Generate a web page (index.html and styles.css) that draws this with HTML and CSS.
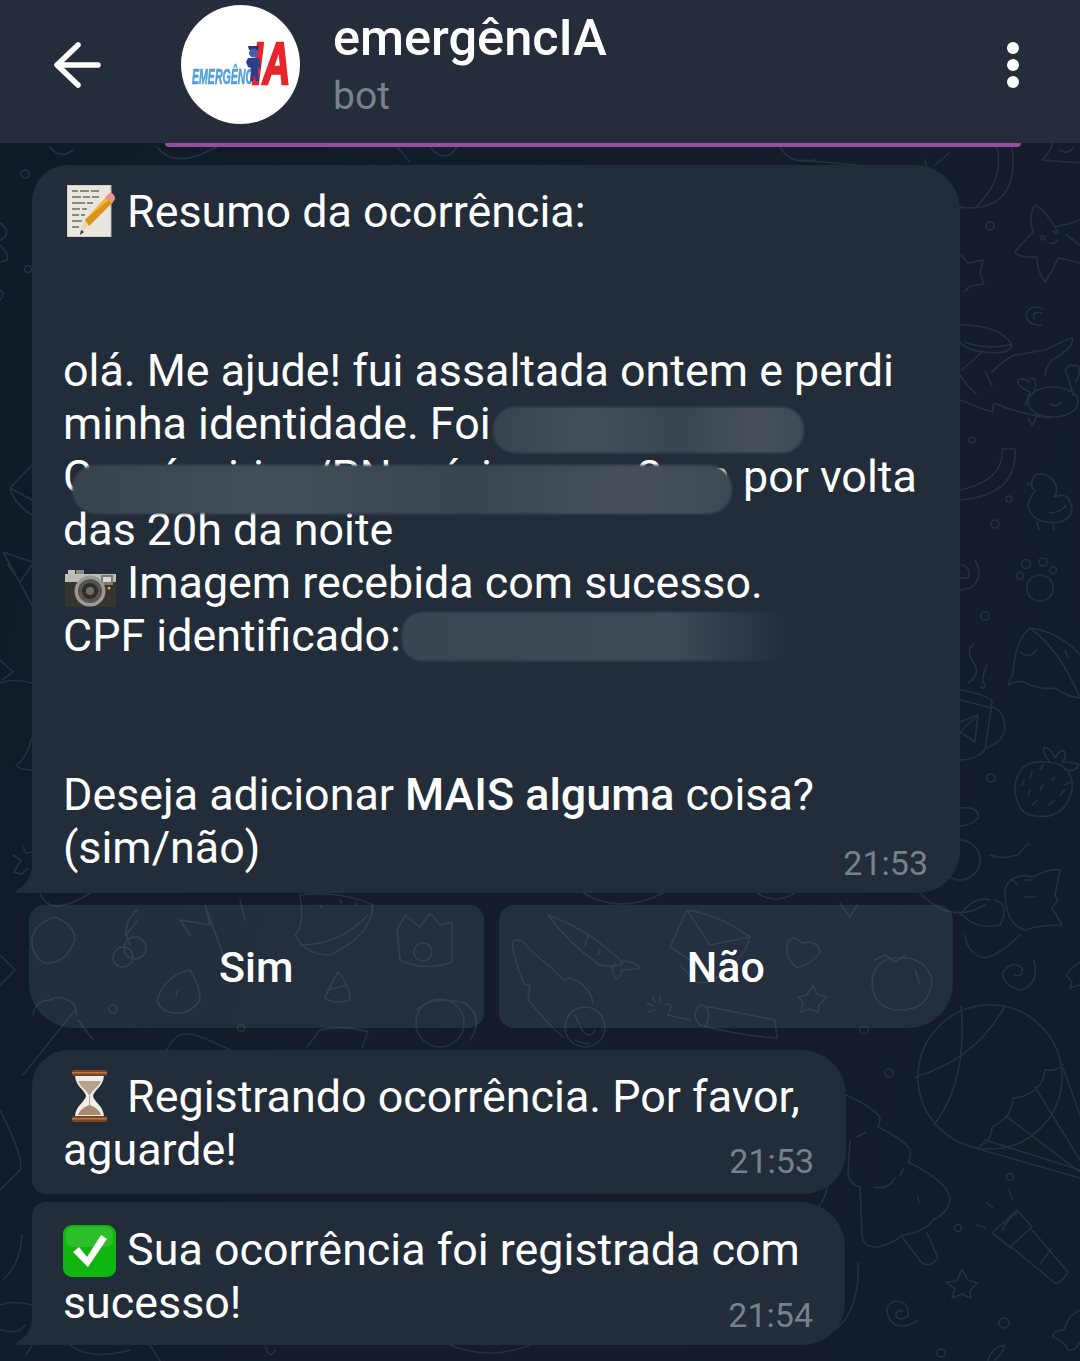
FILE: index.html
```html
<!DOCTYPE html>
<html lang="pt">
<head>
<meta charset="utf-8">
<title>emergêncIA</title>
<link rel="stylesheet" href="styles.css">
</head>
<body>
<div class="phone">
  <svg class="wallpaper" viewBox="0 0 1080 1361" aria-hidden="true">
    <g fill="none" stroke="#263040" stroke-width="1.6" stroke-linecap="round" stroke-linejoin="round">
      <!-- balloon -->
      <circle cx="990" cy="1077" r="72"/>
      <path d="M961 1006Q968 1080 934 1125M1005 1006Q975 1060 915 1077"/>
      <path d="M1063 1064Q1058 1072 1045 1070Q1042 1095 1013 1098Q1012 1118 992 1127Q992 1140 980 1146"/>
      <path d="M985 1140L1080 1170M975 1148L1080 1178M1007 1117L1080 1172M1035 1087L1080 1160M1063 1068L1080 1115"/>
      <!-- tree -->
      <path d="M846 1095Q870 1105 880 1117Q880 1122 878 1127Q905 1140 910 1150Q911 1158 908 1162Q945 1180 950 1197Q950 1212 933 1220Q925 1232 903 1235Q890 1245 877 1247Q862 1248 862 1233L860 1187"/>
      <path d="M850 1140L848 1175Q850 1185 860 1187M903 1238L922 1263Q930 1268 938 1258L927 1233"/>
      <path d="M857 1137L866 1132M875 1187Q888 1190 895 1178M900 1175L904 1168M918 1197L919 1203"/>
      <!-- flashlight -->
      <path d="M992 1233L1017 1210L1032 1227L1010 1247ZM1002 1231Q1008 1218 1017 1212M1010 1246L1055 1283Q1060 1285 1068 1272L1032 1230M1040 1264L1052 1248"/>
      <path d="M1009 1189L1012 1199M987 1203L993 1208M977 1225L985 1228"/>
      <circle cx="1010" cy="1177" r="3.500"/><circle cx="958" cy="1228" r="3.500"/><circle cx="889" cy="1073" r="4"/><circle cx="1004" cy="1323" r="5"/><circle cx="941" cy="1353" r="4"/>
      <path d="M962 1269L968 1280L977 1283L970 1291L971 1298L962 1294L952 1298L955 1289L946 1282L957 1281Z"/>
      <path d="M917 1321Q900 1332 890 1320Q882 1305 896 1301Q910 1302 908 1316Q900 1322 896 1316Q896 1309 903 1311"/>
      <path d="M1080 1310Q1068 1315 1064 1330Q1053 1330 1053 1337Q1065 1342 1068 1350Q1075 1352 1080 1342M988 1360Q993 1346 1005 1345Q1002 1355 995 1360"/>
      <path d="M858 1263Q860 1310 835 1330M827 1187Q825 1200 818 1207"/>
      <!-- top right -->
      <path d="M1012 147Q1020 208 968 208Q935 208 925 160M997 147Q1005 180 975 208M935 165L950 152"/>
      <circle cx="990" cy="226" r="4"/>
      <path d="M1035 205Q1045 210 1055 227Q1068 225 1080 220M1035 205Q1028 215 1033 232Q1020 245 1015 252Q1018 258 1037 257Q1037 272 1045 282Q1052 272 1058 258Q1068 260 1080 263M1066 235L1080 245"/>
      <circle cx="1043" cy="238" r="2"/><circle cx="1056" cy="232" r="2"/>
      <path d="M1050 243Q1055 245 1057 240"/>
      <path d="M1042 160Q1052 150 1052 143M1042 160L1080 163M1060 150Q1068 155 1073 148"/>
      <path d="M961 255L968 263L983 260L980 273L984 284L970 286L964 292"/>
      <path d="M1043 309Q1030 303 1026 315Q1028 326 1041 325M1042 313Q1032 310 1034 318"/>
      <path d="M960 325Q1000 325 1012 345Q1010 355 985 352Q965 350 960 342M965 342Q985 350 1010 345"/>
      <path d="M962 370Q975 358 982 352M992 372Q1012 352 1020 355Q1030 352 1045 350Q1065 340 1072 338Q1075 345 1060 355Q1046 362 1045 375M985 372L992 385M960 375Q970 390 976 393M960 400Q985 410 993 412Q992 400 998 405Q1025 415 1050 418"/>
      <ellipse cx="1053" cy="402" rx="25" ry="15"/>
      <path d="M1025 405L1030 392Q1015 385 1018 380Q1025 377 1028 382Q1032 375 1035 380Q1037 390 1032 395M1028 418L1032 425L1038 415M1073 395Q1068 375 1065 370Q1070 363 1073 366Q1080 362 1079 375L1076 382M1050 404Q1056 408 1062 402"/>
      <circle cx="972" cy="440" r="3"/>
      <path d="M1002 449H1015Q1018 495 960 500M1002 449Q1005 480 960 490"/>
      <circle cx="1009" cy="499" r="3"/><circle cx="995" cy="524" r="4"/>
      <path d="M1035 491Q1028 485 1035 475Q1048 470 1056 485Q1058 492 1054 497Q1070 490 1072 510Q1068 525 1048 522Q1030 520 1028 505Q1030 497 1035 491ZM1027 485L1033 482M1050 513Q1062 512 1066 505M1037 522L1039 530M1053 522L1054 530"/>
      <!-- right middle -->
      <path d="M975 560Q985 578 970 588L960 590M962 565Q972 568 968 578L960 578"/>
      <circle cx="1040" cy="588" r="13"/><circle cx="1026" cy="564" r="4.500"/><circle cx="1043" cy="562" r="4"/><circle cx="1053" cy="570" r="3.500"/><circle cx="1020" cy="576" r="3.500"/>
      <circle cx="985" cy="616" r="4"/>
      <path d="M1030 628Q1015 640 1013 673L1008 685Q1020 678 1030 685Q1045 690 1055 688Q1068 697 1080 698M1030 628Q1060 632 1080 655M1030 628Q1060 650 1080 698M1065 650L1068 658M1020 652Q1030 660 1036 650"/>
      <path d="M973 645Q965 650 975 665Q980 675 968 683M987 665Q980 680 985 685Q985 690 980 687"/>
      <path d="M960 690Q990 695 992 702L985 750Q975 760 960 760M960 700L992 708M992 707Q1005 710 1005 730Q1000 745 985 748M960 722L978 715L975 742L960 732M960 732L978 715"/>
      <circle cx="991" cy="778" r="4"/>
      <path d="M1043 762Q1015 760 1015 792Q1018 815 1035 816Q1065 820 1072 790Q1074 772 1060 765Q1055 762 1043 762ZM1050 762Q1040 750 1045 747Q1052 750 1055 758Q1060 748 1065 752Q1066 760 1062 762Q1075 762 1079 765Q1075 772 1065 770"/>
      <path d="M1022 785L1024 780M1030 778L1032 772M1040 770L1043 765M1028 795L1030 790M1040 790L1043 785M1052 780L1055 777M1060 795L1065 790M1032 805L1038 800M1048 805L1055 800M1065 785L1070 782"/>
      <path d="M960 808Q980 806 978 818Q972 825 960 826"/>
      <circle cx="960" cy="860" r="20"/>
      <path d="M990 855Q1000 860 1018 855Q1030 840 1030 845M1005 890Q1010 872 1033 877Q1050 868 1060 870L1055 895L1058 900L1052 908L1062 925Q1040 925 1025 930Q1005 925 1005 890ZM1012 880L1018 885M1025 880L1033 880M1025 897H1035"/>
      <path d="M990 900Q975 895 960 915M963 915Q975 930 1000 925Q1010 905 995 900M965 935Q968 955 985 958Q1000 955 1020 935"/>
      <path d="M1034 960Q1040 985 1020 990Q1002 985 1003 972Q1012 960 1022 968Q1024 978 1014 975"/>
      <path d="M1080 962L1072 968L1066 975L1072 982L1070 988L1080 985"/>
      <!-- left edge -->
      <circle cx="25" cy="174" r="4"/><circle cx="28" cy="269" r="3.500"/>
      <path d="M0 223Q10 230 5 237L0 240M0 245Q10 255 7 260L0 262M0 290Q6 294 0 300"/>
      <path d="M32 465L10 488Q15 505 32 515M10 488L32 500"/>
      <path d="M3 552L32 562M3 552L32 605M8 565L20 582L32 565"/>
      <path d="M0 660L13 672L2 680M0 683Q15 678 32 683"/>
      <path d="M32 737Q26 760 16 765Q20 770 32 770"/>
      <path d="M22 845L26 853L32 852M13 855L21 860L14 872L22 874L28 868M0 955L15 970L0 985"/>
      <path d="M0 1110Q25 1160 20 1170L0 1190M22 1235Q20 1265 3 1280M0 1305Q15 1300 32 1305M0 1330Q20 1335 25 1325M26 1355L32 1345"/>
      <path d="M50 147Q60 160 73 150M157 147Q170 165 200 155Q210 150 217 147M397 147L410 162M430 147Q445 165 457 147M780 147Q790 165 815 160M800 160L857 165"/>
      <path d="M70 1345Q90 1361 130 1350M150 1345L160 1361M265 1345Q270 1361 275 1350M450 1345Q490 1361 530 1345"/>
      <!-- under the buttons -->
      <path d="M40 893Q50 920 95 890M32 945Q30 925 55 917Q75 925 75 940Q65 965 45 963Q35 960 32 945Z"/>
      <path d="M137 910Q120 925 130 945M125 935Q135 925 138 920"/>
      <circle cx="135" cy="948" r="11"/><circle cx="123" cy="957" r="10"/>
      <path d="M205 905L225 960M205 905L210 925L180 920L190 935M240 900L245 920"/>
      <path d="M300 895Q340 890 373 905Q372 935 330 955Q305 955 295 935Q305 925 300 895ZM300 945Q340 945 368 915M320 905L322 908M340 900L342 903M355 902L357 905"/>
      <path d="M397 930L405 915L420 927L430 913L440 925L452 922L452 962Q425 972 400 960Z"/><circle cx="423" cy="952" r="9"/>
      <path d="M157 1000Q165 975 190 970Q200 985 200 1000Q190 1015 175 1013Q160 1012 157 1000ZM178 990L176 996"/>
      <path d="M338 972Q328 990 325 998Q335 1005 350 1000Q350 985 338 972ZM328 990L347 985"/>
      <circle cx="113" cy="1009" r="4"/>
      <path d="M33 1015Q35 1000 50 1000Q60 995 68 1000Q78 1005 76 1016M75 1010L23 1075M78 1020L93 1040"/>
      <path d="M167 1050Q175 1030 195 1035Q210 1040 230 1050"/>
      <circle cx="241" cy="1028" r="3.500"/>
      <path d="M307 1047L320 1030Q345 1025 368 1032L362 1048"/>
      <circle cx="440" cy="1023" r="24"/>
      <path d="M417 1010Q430 995 465 1003Q485 1018 470 1040"/>
      <path d="M548 915Q590 930 623 963Q615 968 600 965Q570 945 548 915ZM588 935L585 945M600 950L598 955"/>
      <path d="M623 960Q640 965 640 968Q630 970 622 970Q620 980 615 978Q610 970 615 964"/>
      <path d="M512 942Q520 935 530 950Q555 970 563 980L570 978Q590 985 593 1003M512 942Q515 965 525 985L530 985L528 1000L548 1023L563 1037"/>
      <circle cx="585" cy="1027" r="20"/>
      <path d="M575 1015L582 1030Q590 1040 595 1030M575 1040Q585 1045 590 1043"/>
      <path d="M687 910Q720 915 750 937Q745 960 710 982L697 983Q690 975 680 965M687 910L670 947L690 960M687 910L710 945L750 937"/>
      <path d="M802 943Q792 932 787 945Q785 958 797 968Q815 962 820 952Q818 940 802 943Z"/>
      <path d="M813 985L817 994L827 997L819 1005L818 1012L808 1009L801 1012L803 1002L798 997L807 995Z"/>
      <path d="M875 960L885 955L895 962L905 955M872 985Q872 960 895 958Q925 955 932 980Q930 1010 900 1010Q875 1010 872 985ZM915 970L920 985"/>
      <path d="M647 1003L654 1006M652 997L656 1002M660 995L660 1002M648 1012L655 1010M665 1005Q675 1000 668 1015L690 1020"/>
      <path d="M700 1005L775 1020L777 1038Q735 1035 700 1025Q690 1015 700 1005ZM705 1006Q712 1015 705 1027"/>
      <circle cx="864" cy="1030" r="4"/>
      <path d="M583 893Q620 915 663 893M757 893Q775 905 795 893M840 903L850 917L857 905"/>
      <path d="M920 893Q950 925 985 905"/>
    </g>
  </svg>

  <header class="topbar">
    <svg class="back" viewBox="0 0 48 48" aria-hidden="true"><path d="M45 24H5M25 4 4 24 25 44" fill="none" stroke="#fff" stroke-width="5.500" stroke-linecap="round" stroke-linejoin="round"/></svg>
    <div class="avatar">
      <span class="logo-blue">EMERGÊNC</span><span class="logo-red">IA</span>
      <svg class="logo-figure" viewBox="0 0 17 39" aria-hidden="true"><path d="M3 3h11l-1 4H4Z" fill="#27347f"/><circle cx="8.500" cy="10" r="4.500" fill="#4a5cb0"/><path d="M3 15h11l2 9-3 1v6l1 7h-3l-2-7-1 7H5l1-13-3-1-2-5Z" fill="#2d3d8c"/></svg>
    </div>
    <div class="identity">
      <div class="name">emergêncIA</div>
      <div class="status">bot</div>
    </div>
    <div class="more"><i></i><i></i><i></i></div>
  </header>
  <div class="pinned-line"></div>

  <main class="chat">
    <article class="bubble tailed first">
      <div class="line"><svg class="emoji memo" viewBox="0 0 48 52" aria-hidden="true"><rect width="44" height="52" fill="#e8e6de"/><rect width="44" height="52" fill="none" stroke="#b9b7ae"/><path d="M5 6h6m2 0h9m2 0h8M5 12h9m2 0h7m2 0h7M5 18h13m2 0h6M5 24h8m2 0h5M5 30h7m2 0h4M5 36h10M5 42h7" stroke="#6f6b63" stroke-width="1.300"/><path d="M15 43 18 35 40 11l6 6-24 24Z" fill="#f2b82a"/><path d="M18 35l4 6 24-24-3-3Z" fill="#d9921b"/><path d="M13 50l2-7 3-8 4 6-7 5Z" fill="#edd6ae"/><path d="M13 50l1-5 3 2Z" fill="#333"/><path d="M38 13l3-4q3-2 5 0t2 4q0 2-2 4l-1 1Z" fill="#e8948c"/></svg> Resumo da ocorrência:</div>
      <div class="line"></div>
      <div class="line"></div>
      <div class="line">olá. Me ajude! fui assaltada ontem e perdi</div>
      <div class="line">minha identidade. Foi<span class="mask mask-a"></span></div>
      <div class="line"><span class="hidden-bits"><span>C</span><span class="b1">á</span><span class="b2">i</span><span class="b3">i</span><span class="b4">/PN</span><span class="b5">é</span><span class="b6">i</span><span class="b7">2</span><span class="b8">n</span><span class="mask mask-b"></span></span><span class="after-mask">por volta</span></div>
      <div class="line">das 20h da noite</div>
      <div class="line"><svg class="emoji camera" viewBox="0 0 51 37" aria-hidden="true"><rect x="3" y="0" width="7" height="5" fill="#c4c3be"/><rect x="11" y="0" width="8" height="5" fill="#8d8c88"/><rect y="4" width="51" height="9" fill="#bdbcb6"/><rect y="12" width="51" height="25" fill="#35342f"/><rect x="36" y="5" width="12" height="10" fill="#7b7a76"/><rect x="38" y="7" width="8" height="5" fill="#d8d7d0"/><circle cx="25" cy="21" r="15.500" fill="#9a9994"/><circle cx="25" cy="21" r="12" fill="#55544f"/><circle cx="25" cy="21" r="8" fill="#2f2e2b"/><circle cx="25" cy="21" r="4" fill="#6f6e6a"/><circle cx="44" cy="18" r="1.500" fill="#e0b330"/></svg> Imagem recebida com sucesso.</div>
      <div class="line">CPF identificado:<span class="mask mask-c"></span></div>
      <div class="line"></div>
      <div class="line"></div>
      <div class="line">Deseja adicionar <b>MAIS alguma</b> coisa?</div>
      <div class="line">(sim/não)</div>
      <time class="stamp">21:53</time>
    </article>

    <div class="keyboard">
      <button class="key key-left" type="button">Sim</button>
      <button class="key key-right" type="button">Não</button>
    </div>

    <article class="bubble small wait">
      <div class="line"><svg class="emoji hourglass" viewBox="0 0 35 52" aria-hidden="true"><path d="M3 5h29c0 11-10 15-11 21 1 6 11 10 11 21H3c0-11 10-15 11-21C13 20 3 16 3 5Z" fill="#efedea"/><path d="M6 11h23c-2 6-9 9-11.500 15C15 20 8 17 6 11Z" fill="#b7a28c"/><path d="M6 45c1-5 8-9 11.500-10 3.500 1 10.500 5 11.500 10Z" fill="#a98a70"/><path d="M17.500 26v9" stroke="#b7a28c"/><rect x="0" y="0" width="35" height="6" rx="2" fill="#7c4324"/><rect x="0" y="2" width="35" height="1.500" fill="#b5784e"/><rect x="0" y="46" width="35" height="6" rx="2" fill="#7c4324"/><rect x="0" y="48" width="35" height="1.500" fill="#b5784e"/></svg> Registrando ocorrência. Por favor,</div>
      <div class="line">aguarde!</div>
      <time class="stamp">21:53</time>
    </article>

    <article class="bubble small tailed done">
      <div class="line"><svg class="emoji check" viewBox="0 0 53 52" aria-hidden="true"><rect width="53" height="52" rx="9" fill="#11b511"/><rect x="3" y="2" width="47" height="20" rx="7" fill="#4ecb43" opacity=".45"/><path d="M10 27l6-5 8 10L38 10l6 4-19 28Z" fill="#fff"/></svg> Sua ocorrência foi registrada com</div>
      <div class="line">sucesso!</div>
      <time class="stamp">21:54</time>
    </article>
  </main>
</div>
</body>
</html>
```

FILE: styles.css
```css
* { box-sizing: border-box; }
html, body { margin: 0; padding: 0; }
body { background: #141c2a; font-family: Roboto, "Liberation Sans", sans-serif; color: #fff; }

.phone {
  position: relative;
  width: 1080px;
  height: 1361px;
  overflow: hidden;
  background: linear-gradient(105deg, #0f1a24 0%, #141c2a 45%, #141c2b 70%, #121b28 100%);
}
.wallpaper { position: absolute; inset: 0; width: 1080px; height: 1361px; }

.topbar {
  position: relative;
  display: flex;
  align-items: center;
  height: 143px;
  background: #252d3a;
  padding: 0 0 14px 53px;
}
.back { flex: none; width: 48px; height: 48px; margin-right: 80px; }
.avatar {
  position: relative;
  flex: none;
  width: 119px;
  height: 119px;
  border-radius: 50%;
  background: #fff;
  overflow: hidden;
}
.logo-blue {
  position: absolute;
  left: 11px;
  top: 61px;
  font: italic 700 22px/22px "Liberation Sans", sans-serif;
  -webkit-text-stroke: .6px #4f9fe0;
  transform: scaleX(.48);
  transform-origin: left center;
  color: #4f9fe0;
}
.logo-red {
  position: absolute;
  left: 71px;
  top: 29px;
  font: italic 700 60px/60px "Liberation Sans", sans-serif;
  -webkit-text-stroke: 2.500px #e8252c;
  transform: scaleX(.64);
  transform-origin: left center;
  color: #e8252c;
}
.logo-figure { position: absolute; left: 64px; top: 38px; width: 17px; height: 39px; }
.identity { margin-left: 33px; }
.name { font-size: 50.500px; line-height: 56px; font-weight: 500; }
.status { font-size: 39px; line-height: 46px; color: #76828f; margin-top: 7px; }
.more { position: absolute; left: 1007px; top: 42px; display: flex; flex-direction: column; gap: 5px; }
.more i { display: block; width: 12px; height: 12px; border-radius: 50%; background: #fff; }

.pinned-line {
  position: relative;
  height: 4px;
  margin: 0 59px 0 165px;
  background: #954f9e;
  border-radius: 0 0 12px 12px;
}

.chat { position: relative; padding: 18px 0 0 32px; }

.bubble {
  position: relative;
  background: #222d39;
  border-radius: 36px 45px 42px 36px;
  padding: 20px 30px 19px 31px;
  font-size: 44.800px;
  line-height: 53px;
  white-space: nowrap;
}
.first { width: 928px; }
.small { width: 814px; }
.wait { margin-top: 22px; height: 144px; padding-top: 20px; border-bottom-left-radius: 14px; }
.done { margin-top: 8px; height: 143px; width: 813px; padding-top: 21px; border-top-left-radius: 14px; }
.tailed { border-bottom-left-radius: 0; }
.tailed::before {
  content: "";
  position: absolute;
  left: -17px;
  bottom: 0;
  width: 17px;
  height: 24px;
  background: #222d39;
  clip-path: path("M2 24 Q0 22 2 21 Q14 15 17 0 L17 24 Z");
}
.line { height: 53px; }
.line b { font-weight: 500; }

.emoji { display: inline-block; margin-top: -10px; margin-bottom: -10px; height: 52px; }
.memo { width: 48px; margin-left: 4px; margin-right: 1px; }
.camera { width: 51px; height: 37px; margin-top: 0; margin-bottom: -9px; margin-left: 2px; margin-right: 0; }
.hourglass { width: 35px; margin-left: 9px; margin-right: 9px; }
.check { width: 53px; margin-bottom: -12px; margin-right: 0; }

.stamp {
  position: absolute;
  right: 32px;
  bottom: 10px;
  font-size: 34px;
  line-height: 40px;
  color: #75818d;
}
.wait .stamp { bottom: 13px; }

.mask {
  display: inline-block;
  background: linear-gradient(90deg, #39434e, #444e58 30%, #3a444f 60%, #47505a 85%, #3f4954);
  filter: blur(1px);
}
.mask-a { width: 311px; height: 46px; border-radius: 22px; vertical-align: -14px; margin-left: 2px; }
.mask-c {
  width: 388px; height: 49px; border-radius: 20px; vertical-align: -10px; margin-left: 1px;
  background: linear-gradient(90deg, #3b4550 0%, #3f4954 70%, #222d39 100%);
}
.hidden-bits { position: relative; display: inline-block; width: 677px; height: 53px; vertical-align: top; }
.hidden-bits span:not(.mask) { position: absolute; top: 0; }
.hidden-bits .b1 { left: 94px; }
.hidden-bits .b2 { left: 165px; }
.hidden-bits .b3 { left: 190px; }
.hidden-bits .b4 { left: 250px; }
.hidden-bits .b5 { left: 376px; }
.hidden-bits .b6 { left: 418px; }
.hidden-bits .b7 { left: 574px; }
.hidden-bits .b8 { left: 642px; }
.mask-b { position: absolute; left: 9px; top: 15px; width: 660px; height: 49px; border-radius: 24px; }
.after-mask { margin-left: 3px; }

.keyboard { display: flex; gap: 15px; margin: 12px 0 0 -3px; width: 924px; }
.key {
  flex: 1;
  height: 123px;
  border: 0;
  border-radius: 15px 15px 15px 45px;
  background: rgba(150, 175, 200, .13);
  color: #fff;
  font: 500 43px/48px Roboto, sans-serif;
  padding: 0;
}
.key-right { border-radius: 15px 15px 45px 15px; }
```
